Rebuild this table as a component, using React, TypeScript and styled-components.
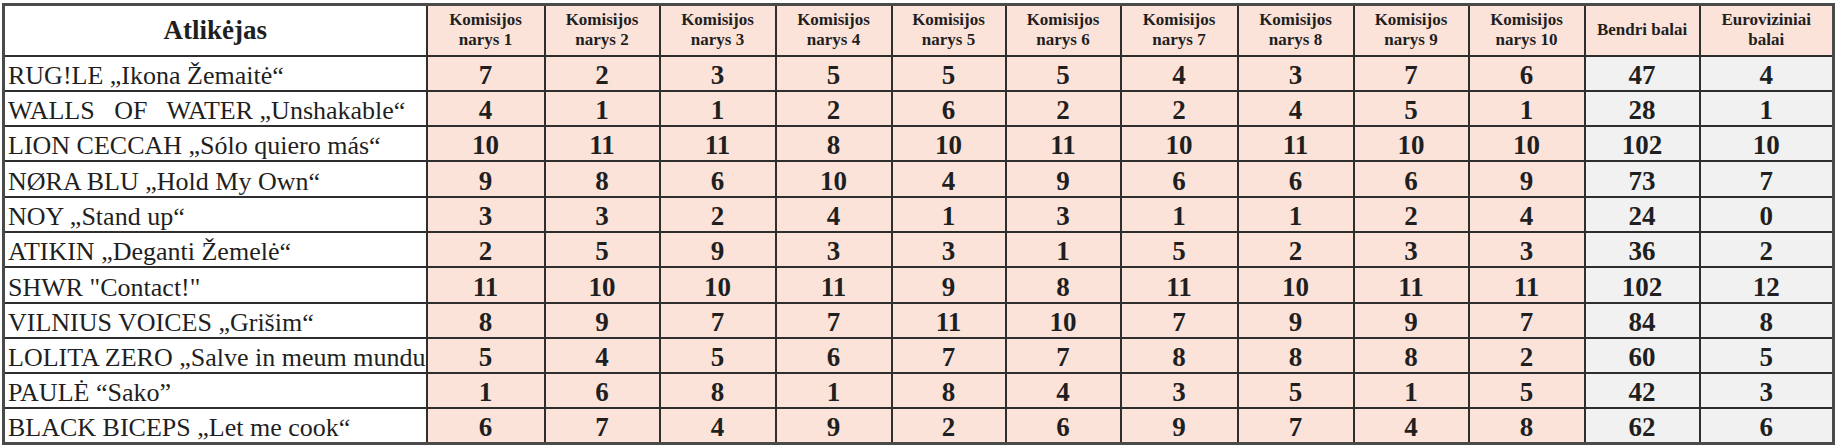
import React from 'react';
import styled, { createGlobalStyle } from 'styled-components';

const GlobalStyle = createGlobalStyle`
  html, body {
    margin: 0;
    padding: 0;
    background: #ffffff;
  }
`;

type Row = {
  name: string;
  scores: number[];
  total: number;
  euro: number;
};

const ROWS: Row[] = [
  { name: 'RUG!LE „Ikona Žemaitė“', scores: [7, 2, 3, 5, 5, 5, 4, 3, 7, 6], total: 47, euro: 4 },
  { name: 'WALLS   OF   WATER „Unshakable“', scores: [4, 1, 1, 2, 6, 2, 2, 4, 5, 1], total: 28, euro: 1 },
  { name: 'LION CECCAH „Sólo quiero más“', scores: [10, 11, 11, 8, 10, 11, 10, 11, 10, 10], total: 102, euro: 10 },
  { name: 'NØRA BLU „Hold My Own“', scores: [9, 8, 6, 10, 4, 9, 6, 6, 6, 9], total: 73, euro: 7 },
  { name: 'NOY „Stand up“', scores: [3, 3, 2, 4, 1, 3, 1, 1, 2, 4], total: 24, euro: 0 },
  { name: 'ATIKIN „Deganti Žemelė“', scores: [2, 5, 9, 3, 3, 1, 5, 2, 3, 3], total: 36, euro: 2 },
  { name: 'SHWR "Contact!"', scores: [11, 10, 10, 11, 9, 8, 11, 10, 11, 11], total: 102, euro: 12 },
  { name: 'VILNIUS VOICES „Grišim“', scores: [8, 9, 7, 7, 11, 10, 7, 9, 9, 7], total: 84, euro: 8 },
  { name: 'LOLITA ZERO „Salve in meum mundum“', scores: [5, 4, 5, 6, 7, 7, 8, 8, 8, 2], total: 60, euro: 5 },
  { name: 'PAULĖ “Sako”', scores: [1, 6, 8, 1, 8, 4, 3, 5, 1, 5], total: 42, euro: 3 },
  { name: 'BLACK BICEPS „Let me cook“', scores: [6, 7, 4, 9, 2, 6, 9, 7, 4, 8], total: 62, euro: 6 },
];

const COL_WIDTHS = [423, 118, 115, 116, 116, 114, 115, 117, 116, 115, 116, 115, 134];

const PINK = '#fbe3da';
const GREY = '#f1f1f1';
const LINE = '#2e2e2e';
const SERIF = `'Liberation Serif', 'Times New Roman', serif`;

const Page = styled.div`
  padding: 3px 0 0 2px;
  font-family: ${SERIF};
`;

const Table = styled.table`
  width: 1830px;
  table-layout: fixed;
  border-collapse: collapse;
  border: 3px solid #4a4a4a;
  font-family: ${SERIF};
  color: #1f1f1f;
`;

const HeadRow = styled.tr`
  height: 51px;
`;

const BodyRow = styled.tr`
  height: 35.3px;
`;

const HeadCell = styled.th<{ $bg: string; $big?: boolean }>`
  border: 2px solid ${LINE};
  background: ${(p) => p.$bg};
  font-family: ${SERIF};
  font-weight: 700;
  font-size: ${(p) => (p.$big ? '27px' : '17px')};
  line-height: ${(p) => (p.$big ? '28px' : '20px')};
  text-align: center;
  vertical-align: middle;
  padding: 0 2px;
`;

const NameCell = styled.td`
  border: 2px solid ${LINE};
  background: #ffffff;
  font-family: ${SERIF};
  font-size: 26px;
  line-height: 27px;
  padding: 0 0 1px 3px;
  vertical-align: bottom;
  white-space: pre;
  overflow: hidden;
`;

const ScoreCell = styled.td<{ $bg: string }>`
  border: 2px solid ${LINE};
  background: ${(p) => p.$bg};
  font-family: ${SERIF};
  font-size: 27px;
  font-weight: 700;
  line-height: 28px;
  padding: 0 0 1px;
  text-align: center;
  vertical-align: bottom;
`;

export default function App() {
  return (
    <Page>
      <GlobalStyle />
      <Table>
        <colgroup>
          {COL_WIDTHS.map((w, i) => (
            <col key={i} style={{ width: w }} />
          ))}
        </colgroup>
        <thead>
          <HeadRow>
            <HeadCell $bg="#ffffff" $big>
              Atlikėjas
            </HeadCell>
            {Array.from({ length: 10 }, (_, i) => (
              <HeadCell key={i} $bg={PINK}>
                Komisijos
                <br />
                narys {i + 1}
              </HeadCell>
            ))}
            <HeadCell $bg={PINK}>Bendri balai</HeadCell>
            <HeadCell $bg={PINK}>
              Euroviziniai
              <br />
              balai
            </HeadCell>
          </HeadRow>
        </thead>
        <tbody>
          {ROWS.map((r) => (
            <BodyRow key={r.name}>
              <NameCell>{r.name}</NameCell>
              {r.scores.map((s, i) => (
                <ScoreCell key={i} $bg={PINK}>
                  {s}
                </ScoreCell>
              ))}
              <ScoreCell $bg={GREY}>{r.total}</ScoreCell>
              <ScoreCell $bg={GREY}>{r.euro}</ScoreCell>
            </BodyRow>
          ))}
        </tbody>
      </Table>
    </Page>
  );
}
